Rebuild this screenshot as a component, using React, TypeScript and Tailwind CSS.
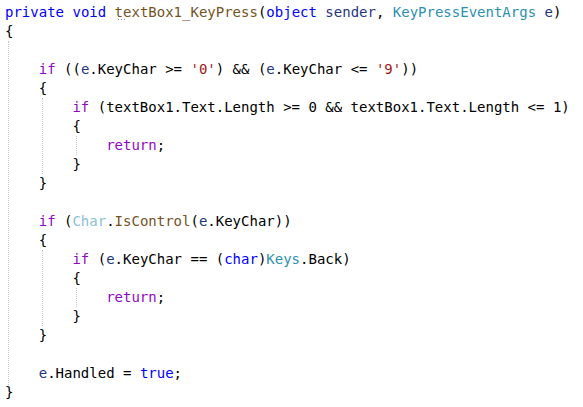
type Tok = [string, string?];

const kw = "text-[#0000ff]";
const ctl = "text-[#8f08c4]";
const str = "text-[#a31515]";
const typ = "text-[#2b91af]";
const fade = "text-[#8cbfd3]";
const mth = "text-[#74531f]";
const prm = "text-[#1f377f]";

const lines: Tok[][] = [
  [["private", kw], [" "], ["void", kw], [" "], ["textBox1_KeyPress", mth], ["("], ["object", kw], [" "], ["sender", prm], [", "], ["KeyPressEventArgs", typ], [" "], ["e", prm], [")"]],
  [["{"]],
  [],
  [["    "], ["if", ctl], [" (("], ["e", prm], [".KeyChar >= "], ["'0'", str], [") && ("], ["e", prm], [".KeyChar <= "], ["'9'", str], ["))"]],
  [["    {"]],
  [["        "], ["if", ctl], [" (textBox1.Text.Length >= 0 && textBox1.Text.Length <= 1)"]],
  [["        {"]],
  [["            "], ["return", ctl], [";"]],
  [["        }"]],
  [["    }"]],
  [],
  [["    "], ["if", ctl], [" ("], ["Char", fade], ["."], ["IsControl", mth], ["("], ["e", prm], [".KeyChar))"]],
  [["    {"]],
  [["        "], ["if", ctl], [" ("], ["e", prm], [".KeyChar == ("], ["char", kw], [")"], ["Keys", typ], [".Back)"]],
  [["        {"]],
  [["            "], ["return", ctl], [";"]],
  [["        }"]],
  [["    }"]],
  [],
  [["    "], ["e", prm], [".Handled = "], ["true", kw], [";"]],
  [["}"]],
];

// vertical block guides drawn over the code
const guides = [
  { left: "left-[8px]", top: "top-[41px]", h: "h-[344px]" },
  { left: "left-[42px]", top: "top-[98px]", h: "h-[76px]" },
  { left: "left-[42px]", top: "top-[250px]", h: "h-[76px]" },
  { left: "left-[76px]", top: "top-[136px]", h: "h-[19px]" },
  { left: "left-[76px]", top: "top-[288px]", h: "h-[19px]" },
];

export default function App() {
  return (
    <div className="relative w-[583px] h-[407px] bg-white overflow-hidden">
      <div className="pt-[3px] pl-[5px] font-['DejaVu_Sans_Mono',monospace] text-[14px] leading-[19px] text-black whitespace-pre">
        {lines.map((line, i) => (
          <div key={i} className="h-[19px]">
            {line.map(([t, c], j) => (
              <span key={j} className={c}>
                {t}
              </span>
            ))}
          </div>
        ))}
      </div>
      {guides.map((g, i) => (
        <div
          key={i}
          className={`absolute w-0 border-l border-dotted border-[#c8c8c8] ${g.left} ${g.top} ${g.h}`}
        />
      ))}
      {/* suggestion dots under the method name */}
      <div className="absolute left-[118px] top-[19px] flex gap-[2px]">
        <span className="w-[1px] h-[1px] bg-[#888]" />
        <span className="w-[1px] h-[1px] bg-[#888]" />
        <span className="w-[1px] h-[1px] bg-[#888]" />
      </div>
    </div>
  );
}
